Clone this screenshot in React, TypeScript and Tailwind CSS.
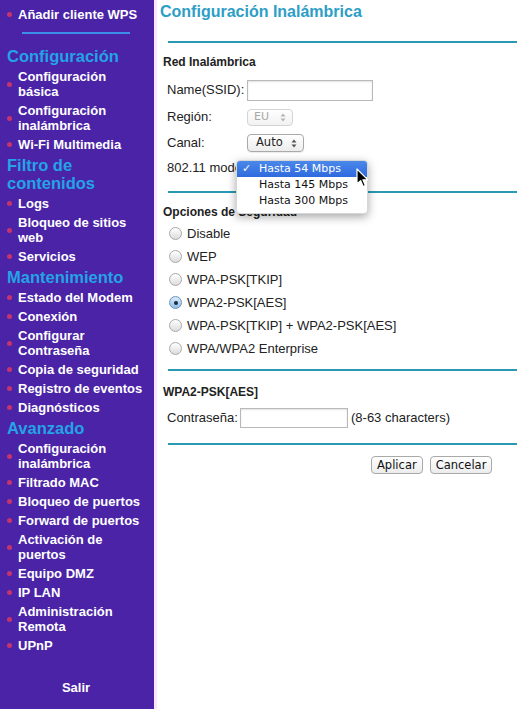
import React from "react"

type NavItem = { kind: "item"; label: string } | { kind: "head"; label: string }

const nav: NavItem[] = [
  { kind: "head", label: "Configuración" },
  { kind: "item", label: "Configuración básica" },
  { kind: "item", label: "Configuración inalámbrica" },
  { kind: "item", label: "Wi-Fi Multimedia" },
  { kind: "head", label: "Filtro de contenidos" },
  { kind: "item", label: "Logs" },
  { kind: "item", label: "Bloqueo de sitios web" },
  { kind: "item", label: "Servicios" },
  { kind: "head", label: "Mantenimiento" },
  { kind: "item", label: "Estado del Modem" },
  { kind: "item", label: "Conexión" },
  { kind: "item", label: "Configurar Contraseña" },
  { kind: "item", label: "Copia de seguridad" },
  { kind: "item", label: "Registro de eventos" },
  { kind: "item", label: "Diagnósticos" },
  { kind: "head", label: "Avanzado" },
  { kind: "item", label: "Configuración inalámbrica" },
  { kind: "item", label: "Filtrado MAC" },
  { kind: "item", label: "Bloqueo de puertos" },
  { kind: "item", label: "Forward de puertos" },
  { kind: "item", label: "Activación de puertos" },
  { kind: "item", label: "Equipo DMZ" },
  { kind: "item", label: "IP LAN" },
  { kind: "item", label: "Administración Remota" },
  { kind: "item", label: "UPnP" },
]

const security = [
  "Disable",
  "WEP",
  "WPA-PSK[TKIP]",
  "WPA2-PSK[AES]",
  "WPA-PSK[TKIP] + WPA2-PSK[AES]",
  "WPA/WPA2 Enterprise",
]

function Item({ label }: { label: string }) {
  return (
    <div className="flex items-center py-[2px] pr-2">
      <span className="w-[18px] shrink-0 flex justify-center pl-[1px]">
        <span className="block w-[5px] h-[5px] rounded-full bg-[#c4346f] blur-[0.6px]" />
      </span>
      <span className="text-[13px] leading-[15px] font-bold text-white">{label}</span>
    </div>
  )
}

function Sidebar() {
  return (
    <aside className="w-[154px] shrink-0 bg-[#4a23a7] pt-[5px] flex flex-col" style={{ fontFamily: '"Liberation Sans", Arial, sans-serif' }}>
      <Item label="Añadir cliente WPS" />
      <div className="ml-[22px] w-[108px] h-[2px] bg-[#3c8fe6] mt-[8px] mb-[11px]" />
      {nav.map((n, i) =>
        n.kind === "head" ? (
          <div key={i} className="pl-[7px] pr-4 pt-[2px] pb-[2px] text-[16.5px] leading-[18px] font-bold text-[#24a3e6]">
            {n.label}
          </div>
        ) : (
          <Item key={i} label={n.label} />
        )
      )}
      <div className="mt-[23px] text-center text-[13px] font-bold text-white pr-[2px]">Salir</div>
    </aside>
  )
}

function Radio({ checked }: { checked?: boolean }) {
  if (checked)
    return (
      <span className="w-[13px] h-[13px] rounded-full border border-[#6e93bd] bg-gradient-to-b from-[#dcecfa] to-[#8ebde9] flex items-center justify-center shrink-0">
        <span className="w-[4px] h-[4px] rounded-full bg-[#1b2a3e]" />
      </span>
    )
  return <span className="w-[13px] h-[13px] rounded-full border border-[#a9a9a9] bg-gradient-to-b from-white to-[#dcdcdc] shrink-0" />
}

function Stepper({ color }: { color: string }) {
  return (
    <svg width="6" height="9" viewBox="0 0 6 9" className="shrink-0">
      <path d="M3 0.5 L5.5 3.5 H0.5 Z" fill={color} />
      <path d="M3 8.5 L5.5 5.5 H0.5 Z" fill={color} />
    </svg>
  )
}

function Divider() {
  return <div className="ml-[11px] h-[2px] bg-[#2a9ab4]" />
}

function Cursor() {
  return (
    <svg width="13" height="20" viewBox="0 0 13 20" className="absolute left-[356px] top-[168px]">
      <path d="M1 1 L1 16 L4.6 12.6 L7.2 18.6 L9.4 17.6 L6.9 11.8 L11.8 11.8 Z" fill="#000" stroke="#fff" strokeWidth="1.2" strokeLinejoin="round" />
    </svg>
  )
}

function ModeMenu() {
  return (
    <div
      className="absolute left-[236px] top-[160px] w-[132px] bg-white rounded-[4px] shadow-[0_3px_10px_rgba(0,0,0,0.35)] border border-[#d6d6d6] pb-[4px] text-[11px] text-[#111]"
      style={{ fontFamily: '"DejaVu Sans", Verdana, sans-serif' }}
    >
      <div className="flex items-center h-[16px] bg-gradient-to-b from-[#4a88ea] to-[#2f6ade] text-white rounded-t-[3px]">
        <span className="w-[22px] pl-[5px]">✓</span>
        <span>Hasta 54 Mbps</span>
      </div>
      <div className="flex items-center h-[16px]">
        <span className="w-[22px]" />
        <span>Hasta 145 Mbps</span>
      </div>
      <div className="flex items-center h-[16px]">
        <span className="w-[22px]" />
        <span>Hasta 300 Mbps</span>
      </div>
    </div>
  )
}

function Main() {
  return (
    <main
      className="flex-1 min-w-0 bg-white border-l-[3px] border-[#fbe5fb] text-[13px] text-[#222]"
      style={{ fontFamily: '"Liberation Sans", Arial, sans-serif' }}
    >
      <h1 className="pl-[3px] pt-[1px] text-[16px] leading-[22px] font-bold text-[#2d9ec6]">Configuración Inalámbrica</h1>
      <div className="mt-[18px]">
        <Divider />
      </div>

      <div className="pl-[6px]">
        <div className="mt-[12px] text-[12px] font-bold leading-[14px]">Red Inalámbrica</div>

        <div className="mt-[10px] flex items-center h-[22px]">
          <span className="w-[84px] pl-[4px]">Name(SSID):</span>
          <span className="w-[126px] h-[21px] border border-[#b9b9b9] shadow-[inset_0_1px_2px_rgba(0,0,0,0.12)] bg-white" />
        </div>

        <div className="mt-[5px] flex items-center h-[22px]">
          <span className="w-[84px] pl-[4px]">Región:</span>
          <span className="w-[46px] h-[17px] rounded-[4px] border border-[#d4d4d4] bg-gradient-to-b from-white to-[#f1f1f1] flex items-center justify-between px-[6px] text-[11px] text-[#a8a8a8]" style={{ fontFamily: '"DejaVu Sans", sans-serif' }}>
            EU
            <Stepper color="#b5b5b5" />
          </span>
        </div>

        <div className="mt-[4px] flex items-center h-[22px]">
          <span className="w-[84px] pl-[4px]">Canal:</span>
          <span className="w-[57px] h-[18px] rounded-[4px] border border-[#a9a9a9] bg-gradient-to-b from-white to-[#ececec] shadow-[0_1px_1px_rgba(0,0,0,0.08)] flex items-center justify-between pl-[8px] pr-[6px] text-[11.5px] text-[#222]" style={{ fontFamily: '"DejaVu Sans", sans-serif' }}>
            Auto
            <Stepper color="#555" />
          </span>
        </div>

        <div className="mt-[4px] flex items-center h-[20px]">
          <span className="pl-[4px]">802.11 mode</span>
        </div>
      </div>

      <div className="mt-[13px]">
        <Divider />
      </div>

      <div className="pl-[6px]">
        <div className="mt-[12px] text-[12px] font-bold leading-[14px]">Opciones de Seguridad</div>
        <div className="mt-[3px] flex flex-col">
          {security.map((s, i) => (
            <label key={s} className="flex items-center gap-[5px] h-[23px] pl-[6px]">
              <Radio checked={i === 3} />
              <span>{s}</span>
            </label>
          ))}
        </div>
      </div>

      <div className="mt-[9px]">
        <Divider />
      </div>

      <div className="pl-[6px]">
        <div className="mt-[14px] text-[12px] font-bold leading-[14px]">WPA2-PSK[AES]</div>
        <div className="mt-[8px] flex items-center h-[21px]">
          <span className="pl-[4px] w-[77px]">Contraseña:</span>
          <span className="w-[108px] h-[20px] border border-[#b9b9b9] shadow-[inset_0_1px_2px_rgba(0,0,0,0.12)] bg-white" />
          <span className="ml-[3px]">(8-63 characters)</span>
        </div>
      </div>

      <div className="mt-[15px]">
        <Divider />
      </div>

      <div className="mt-[11px] flex gap-[7px] pl-[214px]" style={{ fontFamily: '"DejaVu Sans", sans-serif' }}>
        <button className="h-[18px] px-[5px] rounded-[4px] border border-[#a9a9a9] bg-gradient-to-b from-white to-[#ececec] text-[11.5px] leading-[16px] text-[#111]">Aplicar</button>
        <button className="h-[18px] px-[5px] rounded-[4px] border border-[#a9a9a9] bg-gradient-to-b from-white to-[#ececec] text-[11.5px] leading-[16px] text-[#111]">Cancelar</button>
      </div>
    </main>
  )
}

export default function App() {
  return (
    <div className="relative w-[517px] h-[709px] overflow-hidden flex bg-white">
      <Sidebar />
      <Main />
      <ModeMenu />
      <Cursor />
    </div>
  )
}
